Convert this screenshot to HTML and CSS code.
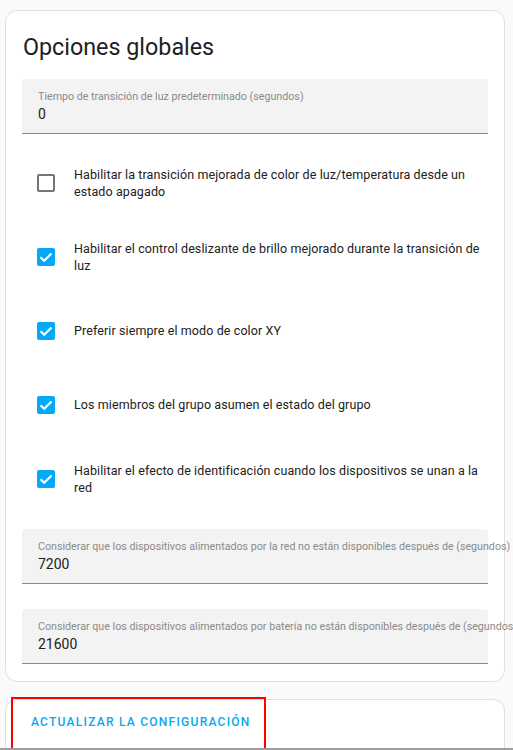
FILE: index.html
```html
<!DOCTYPE html>
<html lang="es">
<head>
<meta charset="utf-8">
<title>Opciones globales</title>
<link rel="stylesheet" href="styles.css">
</head>
<body>
<div class="page">
  <section class="card">
    <h1 class="card-header">Opciones globales</h1>
    <div class="card-content">
      <div class="field">
        <span class="field-label">Tiempo de transición de luz predeterminado (segundos)</span>
        <span class="field-value">0</span>
      </div>
      <div class="options">
        <label class="option">
          <span class="checkbox"></span>
          <span class="option-text">Habilitar la transición mejorada de color de luz/temperatura desde un estado apagado</span>
        </label>
        <label class="option">
          <span class="checkbox checked"><svg viewBox="0 0 18 18"><path d="M3.5 9.2 L7.2 12.8 L14.5 5.4" /></svg></span>
          <span class="option-text">Habilitar el control deslizante de brillo mejorado durante la transición de luz</span>
        </label>
        <label class="option">
          <span class="checkbox checked"><svg viewBox="0 0 18 18"><path d="M3.5 9.2 L7.2 12.8 L14.5 5.4" /></svg></span>
          <span class="option-text">Preferir siempre el modo de color XY</span>
        </label>
        <label class="option">
          <span class="checkbox checked"><svg viewBox="0 0 18 18"><path d="M3.5 9.2 L7.2 12.8 L14.5 5.4" /></svg></span>
          <span class="option-text">Los miembros del grupo asumen el estado del grupo</span>
        </label>
        <label class="option">
          <span class="checkbox checked"><svg viewBox="0 0 18 18"><path d="M3.5 9.2 L7.2 12.8 L14.5 5.4" /></svg></span>
          <span class="option-text">Habilitar el efecto de identificación cuando los dispositivos se unan a la red</span>
        </label>
      </div>
      <div class="field">
        <span class="field-label">Considerar que los dispositivos alimentados por la red no están disponibles después de (segundos)</span>
        <span class="field-value">7200</span>
      </div>
      <div class="field field-last">
        <span class="field-label">Considerar que los dispositivos alimentados por batería no están disponibles después de (segundos)</span>
        <span class="field-value">21600</span>
      </div>
    </div>
  </section>
  <section class="card card-actions">
    <button class="btn" type="button">Actualizar la configuración</button>
  </section>
  <div class="highlight"></div>
</div>
</body>
</html>
```

FILE: styles.css
```css
* { box-sizing: border-box; }
html, body {
  margin: 0;
  padding: 0;
  background: #fafafa;
  font-family: Roboto, "Noto Sans", "Liberation Sans", sans-serif;
  color: #212121;
}
.page {
  position: relative;
  height: 750px;
  overflow: hidden;
  padding: 10px 8px 0 5px;
  border-bottom: 2px solid #9e9e9e;
}
.card {
  background: #fff;
  border: 1px solid #e0e0e0;
  border-radius: 12px;
}
.card-header {
  margin: 0;
  padding: 20px 16px 0 17px;
  font-size: 23.3px;
  font-weight: 400;
  line-height: 32px;
  color: #212121;
}
.card-content {
  padding: 16px 16px 17px 16px;
}
.field {
  display: flex;
  flex-direction: column;
  height: 55px;
  padding: 11px 16px 0 16px;
  background: #f3f3f3;
  border-radius: 4px 4px 0 0;
  border-bottom: 1px solid #8a8a8a;
}
.field + .field { margin-top: 25px; }
.field-label {
  font-size: 10.7px;
  line-height: 14px;
  color: #8a8a8a;
  white-space: nowrap;
}
.field-value {
  font-size: 14px;
  line-height: 20px;
  color: #212121;
}
.options {
  padding: 12px 0 13px 0;
}
.option {
  display: flex;
  align-items: center;
  min-height: 74px;
  padding-left: 15px;
  padding-right: 3px;
  gap: 19px;
}
.checkbox {
  flex: none;
  width: 18px;
  height: 18px;
  border: 2px solid #757575;
  border-radius: 2px;
  display: flex;
  align-items: center;
  justify-content: center;
}
.checkbox.checked {
  background: #03a9f4;
  border-color: #03a9f4;
}
.checkbox svg {
  width: 18px;
  height: 18px;
  flex: none;
}
.checkbox path {
  fill: none;
  stroke: #fff;
  stroke-width: 2.2;
}
.option-text {
  font-size: 12.5px;
  line-height: 17.5px;
  color: #212121;
  letter-spacing: 0.1px;
}
.card-actions {
  margin-top: 17px;
  height: 60px;
  padding: 8px 8px;
}
.btn {
  border: none;
  background: none;
  padding: 0 17px;
  height: 28px;
  font-family: inherit;
  font-size: 12px;
  font-weight: 500;
  letter-spacing: 1.25px;
  text-transform: uppercase;
  color: #03a9f4;
}
.highlight {
  position: absolute;
  left: 11px;
  top: 697px;
  width: 255px;
  height: 54px;
  border: 2px solid #ff0000;
}
```
